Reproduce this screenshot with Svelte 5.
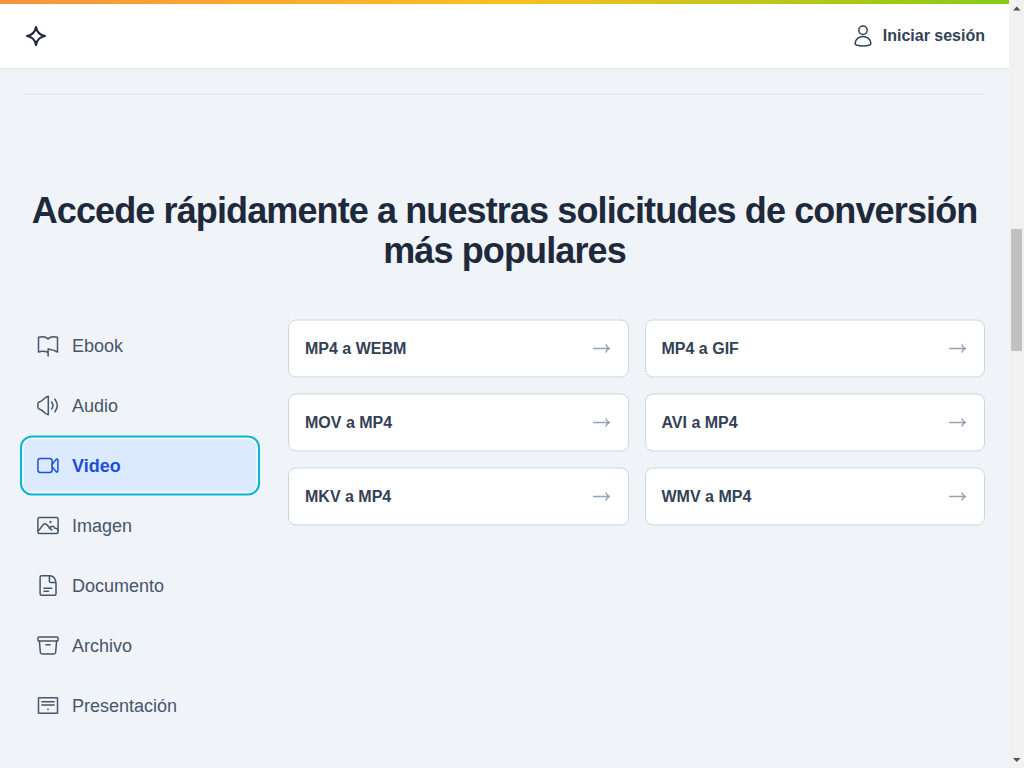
<script>
  const categories = [
    { name: 'Ebook', icon: 'book' },
    { name: 'Audio', icon: 'audio' },
    { name: 'Video', icon: 'video' },
    { name: 'Imagen', icon: 'image' },
    { name: 'Documento', icon: 'document' },
    { name: 'Archivo', icon: 'archive' },
    { name: 'Presentación', icon: 'slides' }
  ];
  const conversions = ['MP4 a WEBM', 'MP4 a GIF', 'MOV a MP4', 'AVI a MP4', 'MKV a MP4', 'WMV a MP4'];
  let active = $state('Video');
</script>

{#snippet glyph(name)}
  <svg class="icon" viewBox="0 0 24 24" aria-hidden="true">
    {#if name === 'book'}
      <path d="M11.800 18.800C8.500 17.600 5.500 17.600 2.500 18.500V3.800C6.500 2.700 9.500 2.900 12 5.400C14.500 2.900 17.500 2.700 21.500 3.800V18.500C18.700 16.800 15.300 15.900 12.100 15.500V22.600" />
    {:else if name === 'audio'}
      <path d="M1.900 10.200Q1.900 8.600 3.600 8.200C7.200 7.800 8 3.200 12.300 2.800V21.200C8 20.800 7.200 16.200 3.600 15.800Q1.900 15.400 1.900 13.800Z" />
      <path d="M15.600 8.500Q18.200 12 15.600 15.500M18.900 5.700Q23.600 12 18.900 18.300" />
    {:else if name === 'video'}
      <rect x="1.900" y="4.900" width="14.200" height="14.200" rx="2.500" />
      <path d="M16.100 10.900L20.300 5.700Q21.900 4.900 21.900 6.900V17.100Q21.900 19.100 20.300 18.300L16.100 13.100" />
    {:else if name === 'image'}
      <rect x="1.900" y="4.100" width="20.200" height="15.800" rx="1.500" />
      <path d="M2.200 17C5.300 15.300 6.200 10.200 8.900 10.200C11.900 10.200 12.800 15 15.800 16.500M13.300 14.800C16.100 11.300 18.500 12.800 18.800 14.900C20.200 14.200 21.300 15.400 22 16.500" />
      <circle class="dot" cx="14.500" cy="8.500" r="1.150" />
    {:else if name === 'document'}
      <path d="M13.700 2.300H5.600Q4.100 2.300 4.100 3.800V20.300Q4.100 21.800 5.600 21.800H18.500Q20 21.800 20 20.300V10.300C20 5.500 17.700 2.300 13.700 2.300Z" />
      <path d="M13.400 2.500V7.700Q13.400 9 14.700 9H19.700M8 14.700H15.700M8 17.800H12.400" />
    {:else if name === 'archive'}
      <rect x="1.900" y="3.600" width="20.200" height="3.800" rx="1" />
      <path d="M3.400 7.400L4.300 18.500Q4.500 20.400 6.200 20.400H17.800Q19.500 20.400 19.700 18.500L20.600 7.400M9.900 11.300H14.100" />
    {:else if name === 'slides'}
      <rect x="2.500" y="4.200" width="19" height="15.600" rx=".5" />
      <path d="M5.900 8.300H18.100M5.900 11.600H18.100" />
      <circle class="dot" cx="12" cy="15.800" r=".9" />
    {:else if name === 'user'}
      <circle cx="12" cy="6.200" r="4.200" />
      <path d="M4.100 19.600C4.800 10 19.200 10 19.900 19.600Q19.900 20.700 18.800 21Q12 23 5.200 21Q4.100 20.700 4.100 19.600Z" />
    {/if}
  </svg>
{/snippet}

<div class="window">
  <div class="page">
    <div class="rainbow"></div>
    <header>
      <a class="brand" href="#inicio" aria-label="Inicio">
        <svg class="spark" viewBox="0 0 24 24" aria-hidden="true">
          <path d="M12 3C12.900 8.500 15.500 11.100 21 12C15.500 12.900 12.900 15.500 12 21C11.100 15.500 8.500 12.900 3 12C8.500 11.100 11.100 8.500 12 3Z" />
        </svg>
      </a>
      <a class="login" href="#sesion">{@render glyph('user')}Iniciar sesión</a>
    </header>
    <main>
      <hr />
      <h2>Accede rápidamente a nuestras solicitudes de conversión más populares</h2>
      <div class="columns">
        <nav>
          {#each categories as category}
            <button class:active={active === category.name} onclick={() => (active = category.name)}>
              {@render glyph(category.icon)}{category.name}
            </button>
          {/each}
        </nav>
        <div class="cards">
          {#each conversions as label}
            <a class="card" href="#conversion">
              {label}
              <svg class="arrow" viewBox="0 0 20 20" aria-hidden="true"><path d="M1.700 10H17.200M14 6.400Q14.600 8.900 17.400 10Q14.600 11.100 14 13.600" /></svg>
            </a>
          {/each}
        </div>
      </div>
    </main>
  </div>
  <div class="scrollbar" aria-hidden="true">
    <svg viewBox="0 0 15 15"><path d="M4 10.500h7.500L7.750 6.500z" /></svg>
    <div class="thumb"></div>
    <svg class="down" viewBox="0 0 15 15"><path d="M4 5h7.500L7.750 9z" /></svg>
  </div>
</div>

<style>
  :global(body) { margin: 0; overflow: hidden; }
  .window {
    display: flex;
    height: 768px;
    overflow: hidden;
    background: #f0f4f9;
    font-family: "Liberation Sans", Arial, sans-serif;
    color: #1e293b;
  }
  .page { flex: 1; min-width: 0; }
  .rainbow { height: 4px; background: linear-gradient(90deg, #fb923c, #fbbf24 50%, #84cc16); }
  header {
    display: flex;
    align-items: center;
    justify-content: space-between;
    height: 64px;
    padding: 0 24px;
    background: #fff;
    border-bottom: 1px solid #e2e8f0;
  }
  a { color: inherit; text-decoration: none; }
  svg { display: block; flex: none; }
  .icon { width: 24px; height: 24px; fill: none; stroke: currentColor; stroke-width: 1.5; stroke-linecap: round; stroke-linejoin: round; }
  .dot { fill: currentColor; stroke: none; }
  .spark { width: 24px; height: 24px; fill: none; stroke: #1e293b; stroke-width: 2.1; stroke-linejoin: round; }
  .login { display: flex; align-items: center; gap: 8px; color: #334155; font-size: 16px; font-weight: 700; line-height: 24px; }
  main { padding: 25px 24px 0; }
  hr { height: 1px; margin: 0; border: 0; background: #e2e8f0; }
  h2 { margin: 96px 0 49px; font-size: 36px; line-height: 40px; letter-spacing: -.885px; text-align: center; }
  .columns { display: grid; grid-template-columns: 232px 1fr; gap: 32px; align-items: start; transform: translateY(-.5px); }
  nav { display: grid; gap: 8px; }
  button {
    display: flex;
    align-items: center;
    gap: 12px;
    height: 52px;
    padding: 0 12px;
    border: 0;
    border-radius: 8px;
    background: transparent;
    color: #475569;
    font: 18px/28px "Liberation Sans", Arial, sans-serif;
  }
  .active { background: #dbeafe; color: #1d4ed8; font-weight: 700; box-shadow: 0 0 0 2px #f0f9ff, 0 0 0 4px #06b6d4; }
  .cards { display: grid; grid-template-columns: 1fr 1fr; gap: 16px; }
  .card {
    display: flex;
    align-items: center;
    justify-content: space-between;
    box-sizing: border-box;
    height: 58px;
    padding: 0 16px;
    border: 1px solid #cbd5e1;
    border-radius: 8px;
    background: #fff;
    color: #334155;
    font-size: 16px;
    font-weight: 700;
  }
  .arrow { width: 20px; height: 20px; fill: none; stroke: #94a3b8; stroke-width: 1.5; stroke-linecap: round; stroke-linejoin: round; }
  .scrollbar { display: flex; flex-direction: column; width: 15px; background: #f1f1f1; }
  .scrollbar svg { width: 15px; height: 15px; fill: #505050; }
  .thumb { width: 11px; height: 122px; margin: 214px 0 0 2px; background: #c1c1c1; }
  .scrollbar .down { margin-top: auto; }
</style>
